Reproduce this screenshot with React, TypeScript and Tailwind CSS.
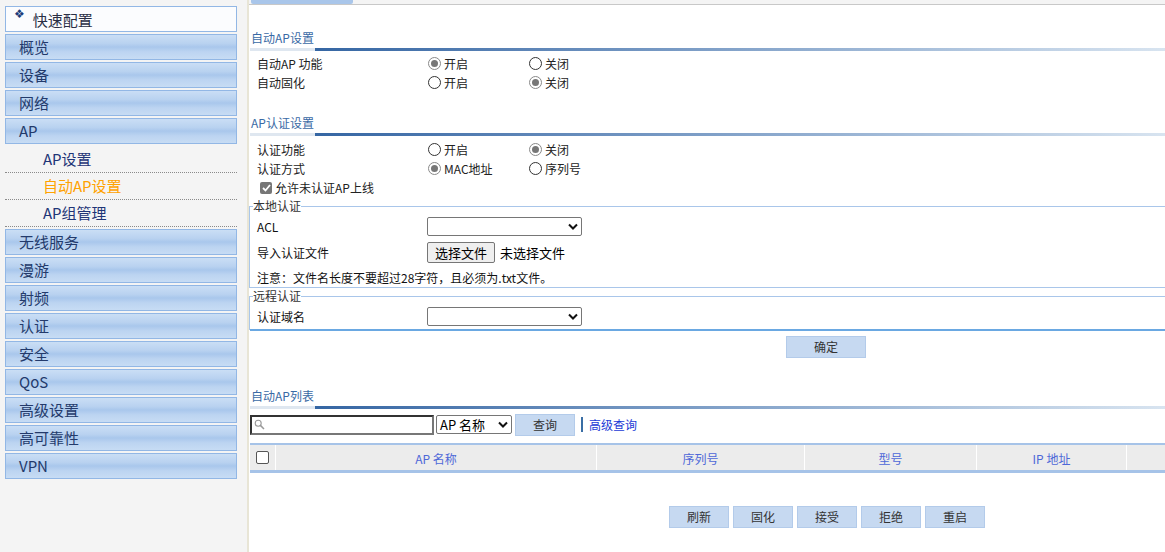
import React from "react";

const FONT = '"Noto Sans CJK SC", "Microsoft YaHei", "Liberation Sans", sans-serif';

const menu = ["概览", "设备", "网络", "AP"];
const menu2 = ["无线服务", "漫游", "射频", "认证", "安全", "QoS", "高级设置", "高可靠性", "VPN"];

const MenuItem = ({ label }: { label: string }) => (
  <div className="h-[26px] flex items-center pl-[13px] border border-[#92b7e5] bg-[linear-gradient(to_bottom,#cadef5_0%,#b9d2f0_35%,#a9c7ec_50%,#bcd4f1_70%,#c7dcf4_100%)] text-[15px] text-[#233a6b]">
    {label}
  </div>
);

const Radio = ({ checked }: { checked?: boolean }) => (
  <span
    className={`inline-flex items-center justify-center w-[13px] h-[13px] rounded-full border bg-white ${
      checked ? "border-[#8a8a8a]" : "border-[#333]"
    }`}
  >
    {checked && <span className="w-[7px] h-[7px] rounded-full bg-[#777]" />}
  </span>
);

const RadioRow = ({ label, a, b, first }: { label: string; a: string; b: string; first: boolean }) => (
  <div className="h-[19px] flex items-center text-[12px] text-[#222]">
    <div className="w-[179px] pl-[8px]">{label}</div>
    <div className="w-[101px] flex items-center gap-[3px]">
      <Radio checked={first} />
      <span>{a}</span>
    </div>
    <div className="flex items-center gap-[3px]">
      <Radio checked={!first} />
      <span>{b}</span>
    </div>
  </div>
);

const SectionTitle = ({ title, className }: { title: string; className: string }) => (
  <div className={className}>
    <div className="h-[16px] leading-[16px] pl-[2px] text-[12px] text-[#3a6aa5]">{title}</div>
    <div className="mt-[2px] h-[3px] flex ml-[1px]">
      <div className="w-[65px] bg-[#dfe7f0]" />
      <div className="flex-1 bg-gradient-to-r from-[#3566a3] to-[#d8e4f0]" />
    </div>
  </div>
);

const Select = ({ w, text }: { w: string; text?: string }) => (
  <div className={`${w} h-[19px] border border-[#767676] rounded-[2px] bg-white flex items-center justify-between px-[3px] text-[13px] text-black`}>
    <span>{text}</span>
    <svg width="10" height="7" viewBox="0 0 10 7">
      <path d="M1 1.5 L5 5.5 L9 1.5" fill="none" stroke="#111" strokeWidth="2" />
    </svg>
  </div>
);

const BlueBtn = ({ label, w }: { label: string; w: string }) => (
  <div className={`${w} h-[22px] flex items-center justify-center bg-[#c6d9f1] border border-[#b3cbea] text-[12px] text-[#333]`}>
    {label}
  </div>
);

export default function App() {
  return (
    <div className="w-[1165px] h-[552px] flex overflow-hidden bg-white" style={{ fontFamily: FONT }}>
      {/* sidebar */}
      <div className="w-[247px] h-full bg-[#f4f4f4] pl-[5px] pt-[6px] flex flex-col gap-[2px]">
        <div className="w-[232px] flex flex-col gap-[2px]">
          <div className="h-[26px] flex items-start border border-[#92b7e5] bg-[#fbfcfe]">
            <span className="ml-[8px] mt-[0px] text-[12px] leading-[14px] text-[#1b3c7a]" style={{ fontFamily: '"DejaVu Sans", sans-serif' }}>
              ❖
            </span>
            <span className="ml-[8px] text-[15px] leading-[26px] text-[#2a2f45]">快速配置</span>
          </div>
          {menu.map((m) => (
            <MenuItem key={m} label={m} />
          ))}
          <div className="flex flex-col">
            {["AP设置", "自动AP设置", "AP组管理"].map((s, i) => (
              <div
                key={s}
                className={`h-[27px] flex items-center pl-[38px] text-[15px] border-b border-dotted border-[#8a8a8a] ${
                  i === 1 ? "text-[#ffa200]" : "text-[#1f3577]"
                }`}
              >
                {s}
              </div>
            ))}
          </div>
          {menu2.map((m) => (
            <MenuItem key={m} label={m} />
          ))}
        </div>
      </div>

      {/* main */}
      <div className="flex-1 h-full border-l-2 border-[#e8e5d6] flex flex-col">
        <div className="h-[4px] bg-[#f4f4f4] border-b border-[#c8c8c8] box-content">
          <div className="ml-[2px] w-[102px] h-[4px] bg-[#a9c6ea] rounded-b-[2px]" />
        </div>

        <SectionTitle title="自动AP设置" className="mt-[25px]" />
        <div className="mt-[3px]">
          <RadioRow label="自动AP 功能" a="开启" b="关闭" first />
          <RadioRow label="自动固化" a="开启" b="关闭" first={false} />
        </div>

        <SectionTitle title="AP认证设置" className="mt-[23px]" />
        <div className="mt-[4px]">
          <RadioRow label="认证功能" a="开启" b="关闭" first={false} />
          <div className="h-[19px] flex items-center text-[12px] text-[#222]">
            <div className="w-[179px] pl-[8px]">认证方式</div>
            <div className="w-[101px] flex items-center gap-[3px]">
              <Radio checked />
              <span>MAC地址</span>
            </div>
            <div className="flex items-center gap-[3px]">
              <Radio />
              <span>序列号</span>
            </div>
          </div>
          <div className="h-[20px] flex items-center pl-[11px] gap-[3px] text-[12px] text-[#222]">
            <span className="w-[12px] h-[12px] rounded-[2px] bg-[#767676] flex items-center justify-center">
              <svg width="9" height="8" viewBox="0 0 9 8">
                <path d="M1 4 L3.5 6.5 L8 1" fill="none" stroke="#fff" strokeWidth="1.8" />
              </svg>
            </span>
            <span>允许未认证AP上线</span>
          </div>
        </div>

        <fieldset className="border-t border-l border-b border-[#a9c6ea] pb-[1px]">
          <legend className="ml-[3px] h-[16px] leading-[16px] text-[12px] text-[#333]">本地认证</legend>
          <div className="mt-[3px] h-[19px] flex items-center text-[12px] text-[#111]">
            <div className="w-[177px] pl-[7px]">ACL</div>
            <Select w="w-[155px]" />
          </div>
          <div className="mt-[6px] h-[21px] flex items-center text-[12px] text-[#111]">
            <div className="w-[177px] pl-[7px]">导入认证文件</div>
            <div className="h-[21px] px-[7px] flex items-center border border-[#767676] rounded-[2px] bg-[#efefef] text-[13px] text-black">
              选择文件
            </div>
            <span className="ml-[5px] text-[13px] text-black">未选择文件</span>
          </div>
          <div className="mt-[7px] h-[16px] leading-[16px] pl-[7px] text-[12px] text-[#111]">
            注意：文件名长度不要超过28字符，且必须为.txt文件。
          </div>
        </fieldset>

        <fieldset className="border-t border-l border-[#a9c6ea] pb-[4px] relative">
          <legend className="ml-[3px] h-[16px] leading-[16px] text-[12px] text-[#333]">远程认证</legend>
          <div className="mt-[3px] h-[19px] flex items-center text-[12px] text-[#111]">
            <div className="w-[177px] pl-[7px]">认证域名</div>
            <Select w="w-[155px]" />
          </div>
          <div className="absolute left-0 right-0 -bottom-[1px] h-[2px] bg-[#6aa8e2]" />
        </fieldset>

        <div className="mt-[6px] ml-[537px]">
          <BlueBtn label="确定" w="w-[80px]" />
        </div>

        <SectionTitle title="自动AP列表" className="mt-[30px]" />

        <div className="mt-[5px] ml-[1px] h-[21px] flex items-center">
          <div className="w-[184px] h-[20px] border-2 border-t-[#333] border-l-[#333] border-b-[#777] border-r-[#777] bg-white flex items-center pl-[2px]">
            <svg width="11" height="11" viewBox="0 0 11 11">
              <circle cx="4.2" cy="4.2" r="3" fill="none" stroke="#999" strokeWidth="1.1" />
              <path d="M6.4 6.4 L10 10" stroke="#999" strokeWidth="1.5" />
            </svg>
          </div>
          <div className="ml-[2px]">
            <Select w="w-[76px]" text="AP 名称" />
          </div>
          <div className="ml-[3px]">
            <BlueBtn label="查询" w="w-[60px]" />
          </div>
          <div className="ml-[6px] w-[2px] h-[15px] bg-[#3a6ea5]" />
          <span className="ml-[6px] text-[12px] text-[#1a3ad6]">高级查询</span>
        </div>

        <div className="mt-[8px] ml-[1px] border-t-2 border-b-[3px] border-[#a6c3e8] bg-[#ececec] h-[30px] flex text-[12px] text-[#4e68d8]">
          <div className="w-[26px] flex items-center justify-center border-r border-white">
            <span className="w-[13px] h-[13px] rounded-[2px] border border-[#555] bg-white" />
          </div>
          <div className="w-[321px] flex items-center justify-center pt-[3px] border-r border-white">AP 名称</div>
          <div className="w-[208px] flex items-center justify-center pt-[3px] border-r border-white">序列号</div>
          <div className="w-[172px] flex items-center justify-center pt-[3px] border-r border-white">型号</div>
          <div className="w-[150px] flex items-center justify-center pt-[3px] border-r border-white">IP 地址</div>
          <div className="flex-1" />
        </div>

        <div className="mt-[33px] ml-[420px] flex gap-[4px]">
          {["刷新", "固化", "接受", "拒绝", "重启"].map((b) => (
            <BlueBtn key={b} label={b} w="w-[60px]" />
          ))}
        </div>
      </div>
    </div>
  );
}
